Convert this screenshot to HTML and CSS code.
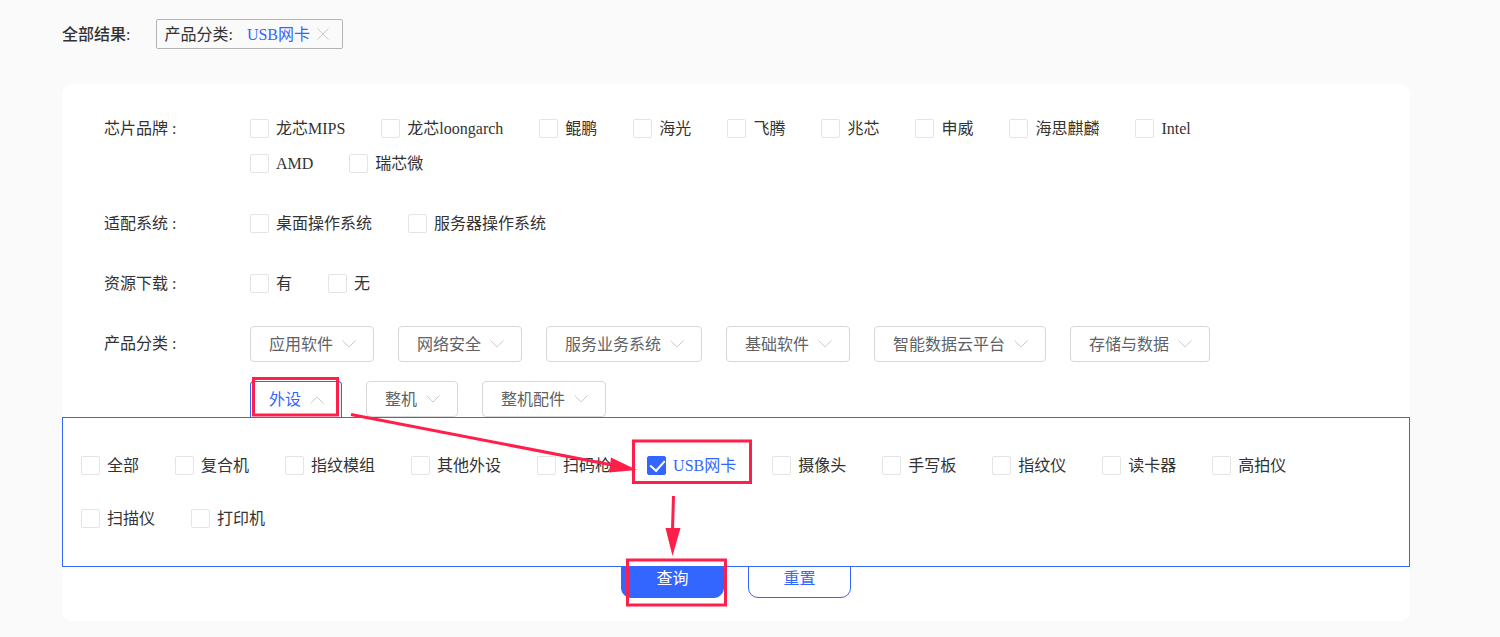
FILE: index.html
```html
<!DOCTYPE html>
<html lang="zh-CN">
<head>
  <meta charset="UTF-8" />
  <meta name="viewport" content="width=device-width, initial-scale=1.0"/>
  <title>产品分类</title>
  <link rel="stylesheet" href="styles.css">
</head>
<body>

<svg class="sprite" aria-hidden="true">
  <symbol id="down" viewBox="0 0 14 8"><path d="M0.5 0.5L7 7L13.5 0.5"/></symbol>
  <symbol id="up" viewBox="0 0 14 8"><path d="M0.5 7.5L7 1L13.5 7.5"/></symbol>
  <symbol id="close" viewBox="0 0 12 12"><path d="M0.5 0.5L11.5 11.5M11.5 0.5L0.5 11.5"/></symbol>
</svg>

<div class="page">
  <!-- Selected filters -->
  <div class="result">
    <span class="result-title">全部结果:</span>
    <div class="tag">
      <span>产品分类:</span>
      <span class="tag-value">USB网卡</span>
      <button type="button" class="tag-close" aria-label="删除"><svg><use href="#close"/></svg></button>
    </div>
  </div>

  <form class="card">
    <div class="filters">
      <div class="filter-row">
        <div class="filter-label">芯片品牌 :</div>
        <div class="options">
          <label class="option"><input type="checkbox">龙芯MIPS</label>
          <label class="option"><input type="checkbox">龙芯loongarch</label>
          <label class="option"><input type="checkbox">鲲鹏</label>
          <label class="option"><input type="checkbox">海光</label>
          <label class="option"><input type="checkbox">飞腾</label>
          <label class="option"><input type="checkbox">兆芯</label>
          <label class="option"><input type="checkbox">申威</label>
          <label class="option"><input type="checkbox">海思麒麟</label>
          <label class="option"><input type="checkbox">Intel</label>
          <label class="option"><input type="checkbox">AMD</label>
          <label class="option"><input type="checkbox">瑞芯微</label>
        </div>
      </div>

      <div class="filter-row">
        <div class="filter-label">适配系统 :</div>
        <div class="options">
          <label class="option"><input type="checkbox">桌面操作系统</label>
          <label class="option"><input type="checkbox">服务器操作系统</label>
        </div>
      </div>

      <div class="filter-row">
        <div class="filter-label">资源下载 :</div>
        <div class="options">
          <label class="option"><input type="checkbox">有</label>
          <label class="option"><input type="checkbox">无</label>
        </div>
      </div>

      <div class="filter-row">
        <div class="filter-label">产品分类 :</div>
        <div class="categories">
          <button type="button" class="category">应用软件<svg><use href="#down"/></svg></button>
          <button type="button" class="category">网络安全<svg><use href="#down"/></svg></button>
          <button type="button" class="category">服务业务系统<svg><use href="#down"/></svg></button>
          <button type="button" class="category">基础软件<svg><use href="#down"/></svg></button>
          <button type="button" class="category">智能数据云平台<svg><use href="#down"/></svg></button>
          <button type="button" class="category">存储与数据<svg><use href="#down"/></svg></button>
          <button type="button" class="category active" aria-expanded="true">外设<svg><use href="#up"/></svg></button>
          <button type="button" class="category">整机<svg><use href="#down"/></svg></button>
          <button type="button" class="category">整机配件<svg><use href="#down"/></svg></button>
        </div>
      </div>

      <!-- Sub categories, opens over the buttons -->
      <div class="panel">
        <label class="option"><input type="checkbox">全部</label>
        <label class="option"><input type="checkbox">复合机</label>
        <label class="option"><input type="checkbox">指纹模组</label>
        <label class="option"><input type="checkbox">其他外设</label>
        <label class="option"><input type="checkbox">扫码枪</label>
        <label class="option checked"><input type="checkbox" checked>USB网卡</label>
        <label class="option"><input type="checkbox">摄像头</label>
        <label class="option"><input type="checkbox">手写板</label>
        <label class="option"><input type="checkbox">指纹仪</label>
        <label class="option"><input type="checkbox">读卡器</label>
        <label class="option"><input type="checkbox">高拍仪</label>
        <label class="option"><input type="checkbox">扫描仪</label>
        <label class="option"><input type="checkbox">打印机</label>
      </div>
    </div>

    <div class="actions">
      <button type="button" class="btn primary">查询</button>
      <button type="reset" class="btn">重置</button>
    </div>
  </form>

  <!-- Step marks -->
  <svg class="marks" viewBox="0 0 1500 637" aria-hidden="true">
    <g fill="none" stroke="#ff1f4b" stroke-width="3">
      <rect x="253.5" y="378.5" width="84" height="36.5"/>
      <rect x="633.5" y="441" width="117" height="41.5"/>
      <rect x="627.5" y="560" width="98" height="45"/>
      <path d="M351 414.5L612 465M673.5 496L672.5 530"/>
    </g>
    <path fill="#ff1f4b" d="M611 457.5L637 470L609 472.5ZM665.5 528H680.5L672.5 556Z"/>
  </svg>
</div>

</body>
</html>
```

FILE: styles.css
```css
:root {
  --bg-color: #fafafa;
  --text-color: #333;
  --subtext-color: #606266;
  --primary: #3366ff;
  --border: #d9d9d9;
  --box-border: #e4e4e4;
}

* {
  box-sizing: border-box;
}

body {
  margin: 0;
  font-family: "Liberation Serif", "Noto Sans CJK SC", serif;
  font-size: 16px;
  line-height: 19px;
  background: var(--bg-color);
  color: var(--text-color);
}

button {
  font: inherit;
  cursor: pointer;
}

svg {
  fill: none;
  stroke: #ccc;
}

.sprite {
  display: none;
}

.page {
  position: relative;
  padding: 19px 90px 16px 62px;
}

.result {
  display: flex;
  align-items: center;
  gap: 26px;
  margin-bottom: 35px;
}

.result-title {
  font-weight: 500;
}

.tag {
  display: flex;
  align-items: center;
  gap: 14px;
  height: 30px;
  padding: 0 13px 0 7px;
  border: 1px solid #b3b3b3;
  border-radius: 2px;
}

.tag-value {
  color: var(--primary);
}

.tag-close {
  display: flex;
  margin-left: -7px;
  padding: 0;
  border: none;
  background: none;
}

.tag-close svg {
  width: 12px;
  height: 12px;
}

.card {
  padding: 27px 0 23px;
  background: #fff;
  border-radius: 10px;
}

.filters {
  position: relative;
  display: flex;
  flex-direction: column;
  gap: 25px;
}

.filter-row {
  display: flex;
  padding: 0 150px 0 42px;
}

.filter-label {
  flex: none;
  width: 146px;
  height: 35px;
  line-height: 36px;
}

.options {
  display: flex;
  flex-wrap: wrap;
  gap: 16px 36px;
  padding: 8px 0;
}

.option {
  display: flex;
  align-items: center;
  gap: 7px;
  height: 19px;
  cursor: pointer;
}

.option.checked {
  color: var(--primary);
}

.option input {
  appearance: none;
  position: relative;
  width: 19px;
  height: 19px;
  margin: 0;
  border: 1px solid var(--box-border);
  border-radius: 2px;
  background: #fff;
}

.option input:checked {
  background: var(--primary);
  border-color: var(--primary);
}

.option input:checked::after {
  content: '';
  position: absolute;
  left: 5px;
  top: 0;
  width: 7px;
  height: 12px;
  border: solid #fff;
  border-width: 0 2px 2px 0;
  transform: rotate(42deg);
}

.categories {
  display: flex;
  flex-wrap: wrap;
  gap: 19px 24px;
}

.category {
  display: flex;
  align-items: center;
  gap: 9px;
  height: 36px;
  padding: 0 17px 0 18px;
  border: 1px solid var(--border);
  border-radius: 4px;
  background: #fff;
  color: var(--subtext-color);
}

.category svg {
  width: 14px;
  height: 8px;
}

.category.active {
  border-color: var(--primary);
  border-bottom: none;
  border-radius: 4px 4px 0 0;
  color: var(--primary);
}

.panel {
  position: absolute;
  top: 100%;
  left: 0;
  right: 0;
  display: flex;
  flex-wrap: wrap;
  gap: 34px 36px;
  padding: 38px 40px 38px 18px;
  border: 1px solid var(--primary);
  background: #fff;
}

.actions {
  display: flex;
  justify-content: center;
  gap: 24px;
  margin-top: 141px;
}

.btn {
  width: 103px;
  height: 40px;
  padding: 0;
  border: 1px solid var(--primary);
  border-radius: 10px;
  background: #fff;
  color: var(--primary);
}

.btn.primary {
  background: var(--primary);
  color: #fff;
}

.marks {
  position: absolute;
  top: 0;
  left: 0;
  width: 1500px;
  height: 637px;
  stroke: none;
  pointer-events: none;
}
```
